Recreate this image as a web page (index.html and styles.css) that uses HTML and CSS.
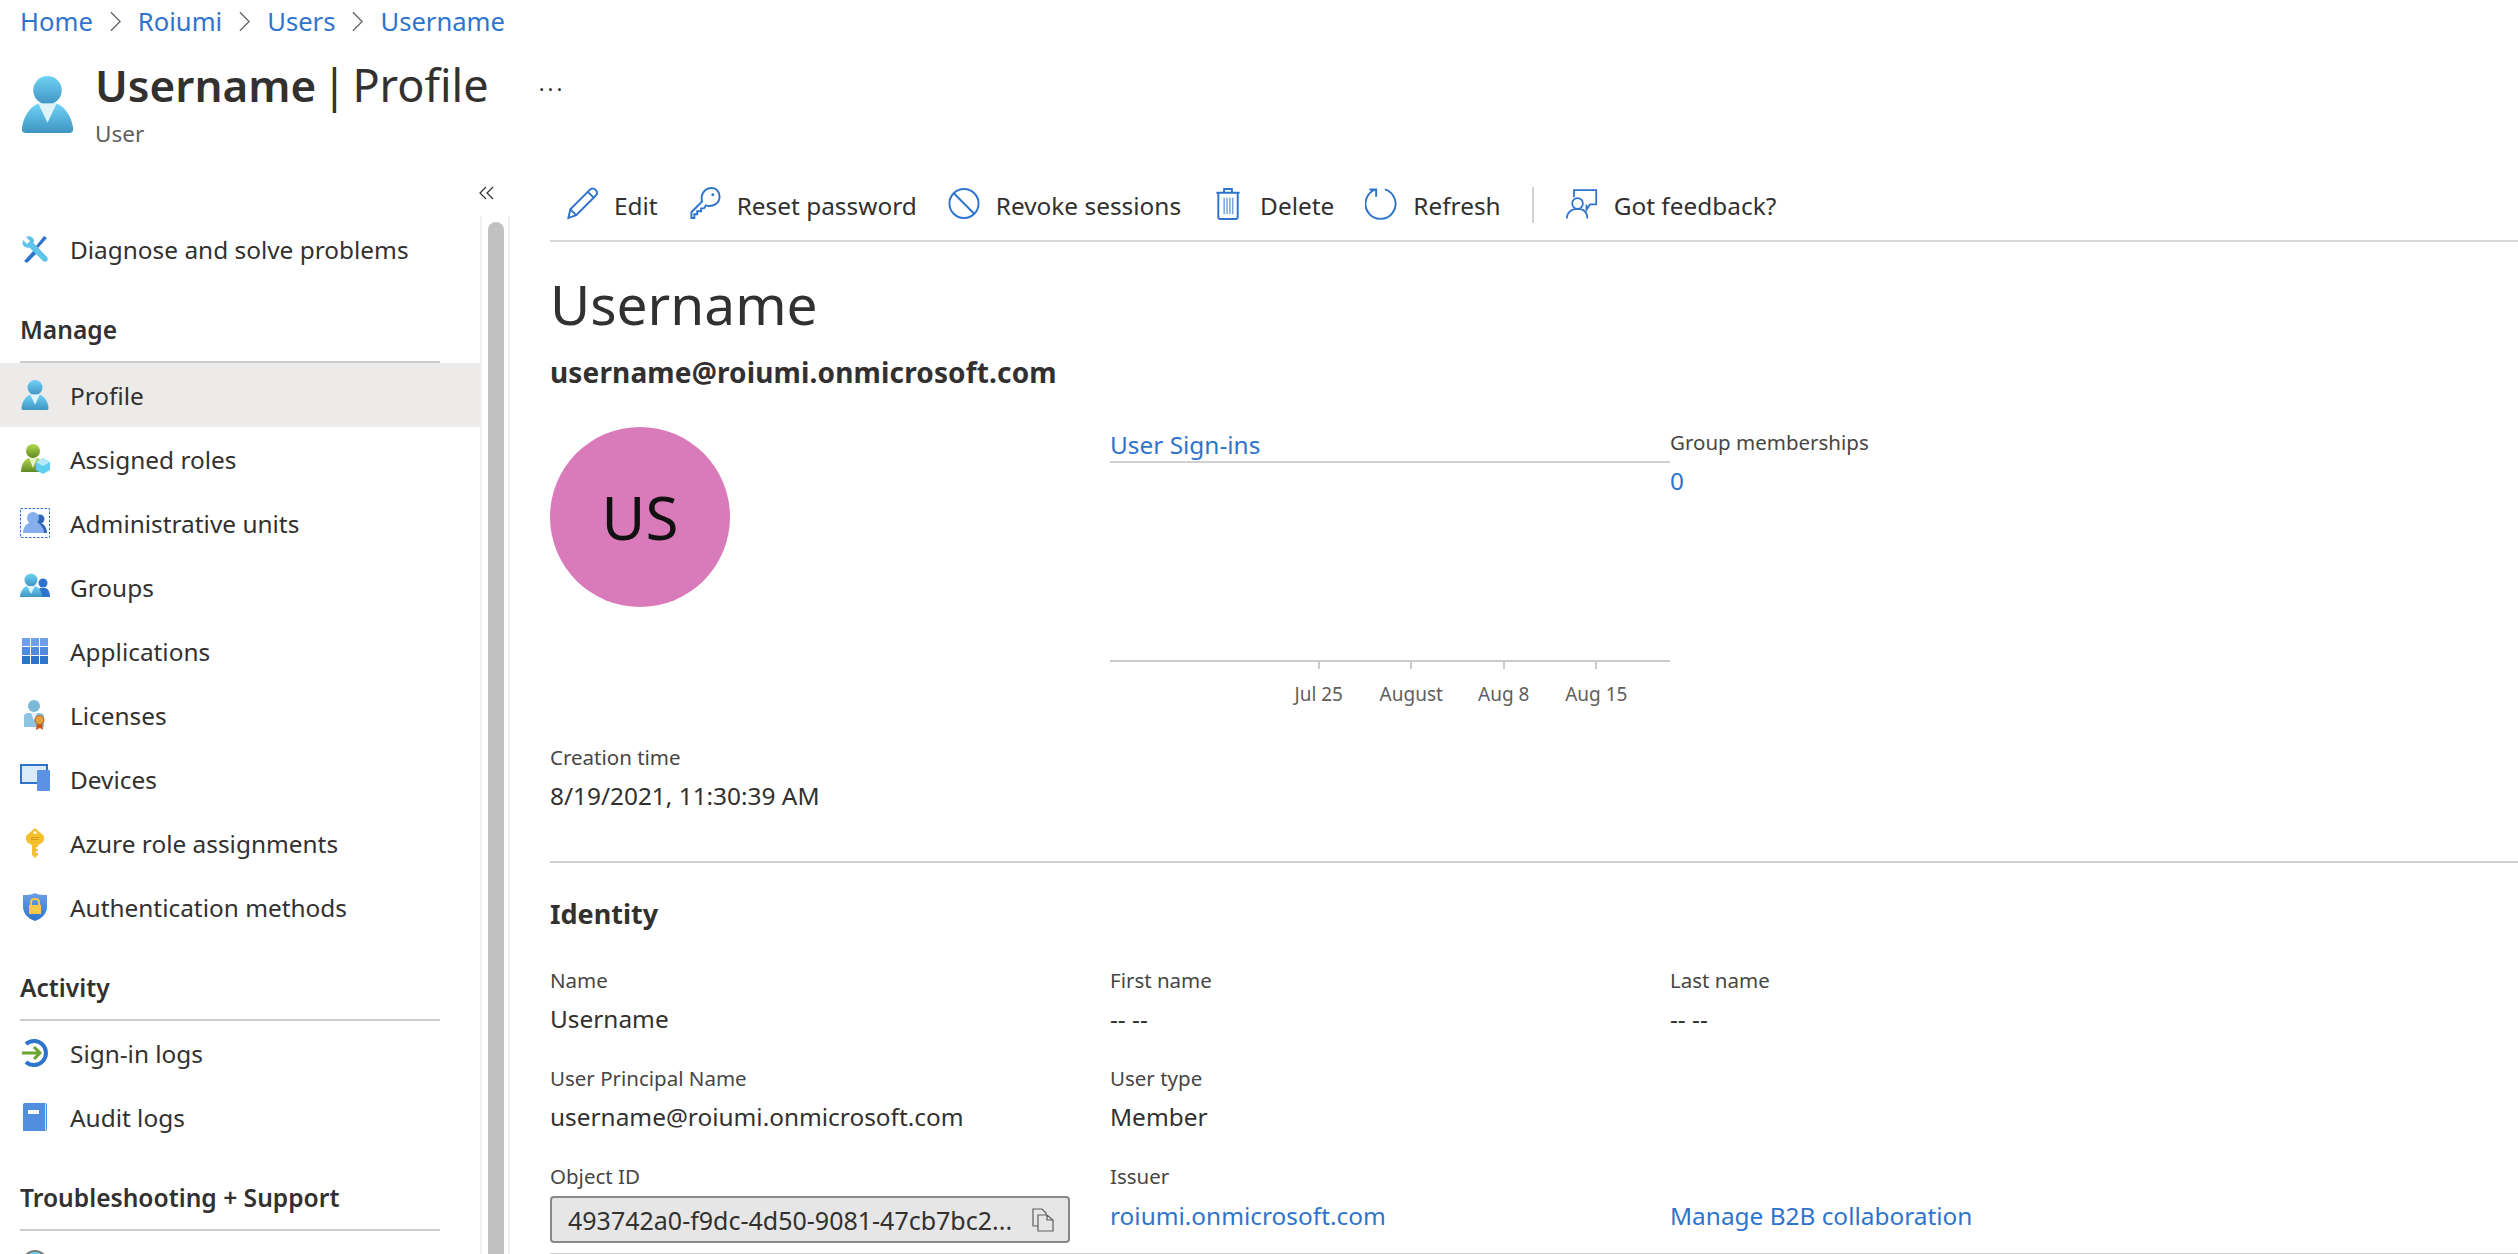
FILE: index.html

```html
<!DOCTYPE html>
<html lang="en">
<head>
    <meta charset="UTF-8">
    <title>Username | Profile</title>
    <link rel="stylesheet" href="styles.css">
</head>
<body>
    <svg class="icon-defs" aria-hidden="true">
        <defs>
            <linearGradient id="grad-sky" x1="0" y1="0" x2="0" y2="1">
                <stop offset="0" stop-color="#6fd3f3"/>
                <stop offset="1" stop-color="#3f94c3"/>
            </linearGradient>
            <linearGradient id="grad-green" x1="0" y1="0" x2="0" y2="1">
                <stop offset="0" stop-color="#b4d84e"/>
                <stop offset="1" stop-color="#5f8a24"/>
            </linearGradient>
            <linearGradient id="grad-blue" x1="0" y1="0" x2="0" y2="1">
                <stop offset="0" stop-color="#6f9fe8"/>
                <stop offset="1" stop-color="#2f74cc"/>
            </linearGradient>
            <symbol id="person" viewBox="0 0 50 56">
                <circle cx="25" cy="14" r="14" fill="url(#grad-sky)"/>
                <path d="M3 56Q-1 56 0 50C2 38 9 29 17 27H33C41 29 48 38 50 50Q51 56 47 56Z" fill="url(#grad-sky)"/>
                <path d="M16 27H34L25 46Z" fill="#dff3fa"/>
            </symbol>
        </defs>
    </svg>

    <nav class="breadcrumb">
        <a href="#">Home</a>
        <svg class="crumb-sep" viewBox="0 0 12 22"><path d="M1 1l10 10L1 21"/></svg>
        <a href="#">Roiumi</a>
        <svg class="crumb-sep" viewBox="0 0 12 22"><path d="M1 1l10 10L1 21"/></svg>
        <a href="#">Users</a>
        <svg class="crumb-sep" viewBox="0 0 12 22"><path d="M1 1l10 10L1 21"/></svg>
        <a href="#">Username</a>
    </nav>

    <header class="page-header">
        <svg class="page-icon"><use href="#person"/></svg>
        <div class="page-titles">
            <h1><b>Username</b> | Profile</h1>
            <div class="page-sub">User</div>
        </div>
        <div class="page-more">···</div>
    </header>

    <div class="layout">
        <aside class="sidebar">
            <div class="side-nav">
                <div class="collapse-row">
                    <svg viewBox="0 0 16 14"><path d="M7 1L1 7l6 6M14 1L8 7l6 6"/></svg>
                </div>

                <a class="nav-item" href="#">
                    <svg class="nav-icon" viewBox="0 0 30 30">
                        <path d="M4 27l11-12 3 3L7 29z" fill="#2f74cc"/>
                        <path d="M24 2l3 2-9 10-2-2z" fill="#2f74cc"/>
                        <path d="M3 6l4 4 3-3-4-4c3-2 7 0 8 3 0 1 0 2-.5 3L27 23c1 1 1 3 0 4s-3 1-4 0L9.500 13.500C5 15 1 11 3 6z" fill="#5ec4ea"/>
                    </svg>
                    <span>Diagnose and solve problems</span>
                </a>

                <h2 class="nav-heading">Manage</h2>
                <a class="nav-item active" href="#">
                    <svg class="nav-icon" viewBox="0 0 30 30"><use href="#person" x="1" y="0" width="28" height="30"/></svg>
                    <span>Profile</span>
                </a>
                <a class="nav-item" href="#">
                    <svg class="nav-icon" viewBox="0 0 30 30">
                        <circle cx="13" cy="7" r="7" fill="url(#grad-green)"/>
                        <path d="M1 28C1 20 5 15 9 14H17C21 15 25 20 25 28Z" fill="url(#grad-green)"/>
                        <path d="M9 14H17L13 24Z" fill="#e6f2c8"/>
                        <path d="M23 14l7 4v8l-7 4-7-4v-8z" fill="#5fd0ef"/>
                        <path d="M23 14l7 4-7 4-7-4z" fill="#b6ecfa"/>
                    </svg>
                    <span>Assigned roles</span>
                </a>
                <a class="nav-item" href="#">
                    <svg class="nav-icon" viewBox="0 0 30 30">
                        <rect x=".5" y=".5" width="29" height="29" fill="none" stroke="#2f74cc" stroke-dasharray="2.500 1.500"/>
                        <circle cx="20" cy="11" r="4.500" fill="#2f68b8"/>
                        <path d="M15 25C15 19 17 15 20 15S27 19 27 25Z" fill="#2f68b8"/>
                        <circle cx="13" cy="10" r="6" fill="#86adec"/>
                        <path d="M3 25C3 19 7 15 10 15H16C20 15 24 20 24 25Z" fill="#86adec"/>
                    </svg>
                    <span>Administrative units</span>
                </a>
                <a class="nav-item" href="#">
                    <svg class="nav-icon" viewBox="0 0 30 30">
                        <circle cx="23" cy="11" r="4.500" fill="#2f74cc"/>
                        <path d="M16 25C16 19 19 16 21 16H25C28 16 30 20 30 25Z" fill="#2f74cc"/>
                        <circle cx="11" cy="8" r="6.500" fill="url(#grad-sky)"/>
                        <path d="M0 25C0 19 4 15 7 14H15C19 15 22 19 22 25Z" fill="url(#grad-sky)"/>
                        <path d="M7 14H15L11 22Z" fill="#dff3fa"/>
                    </svg>
                    <span>Groups</span>
                </a>
                <a class="nav-item" href="#">
                    <svg class="nav-icon" viewBox="0 0 30 30">
                        <path d="M2 2h8v8H2zM11 2h8v8h-8zM20 2h8v8h-8z" fill="#6f9fe8"/>
                        <path d="M2 11h8v8H2zM11 11h8v8h-8zM20 11h8v8h-8z" fill="#4f8adc"/>
                        <path d="M2 20h8v8H2zM11 20h8v8h-8zM20 20h8v8h-8z" fill="#2f74cc"/>
                    </svg>
                    <span>Applications</span>
                </a>
                <a class="nav-item" href="#">
                    <svg class="nav-icon" viewBox="0 0 30 30">
                        <circle cx="14" cy="6" r="6" fill="#7ab8d9"/>
                        <path d="M4 27V16C4 14 6 13 8 13H20C22 13 24 14 24 16V27Z" fill="#8cc4e2"/>
                        <path d="M11 13H17L14 21Z" fill="#e4f3fa"/>
                        <path d="M17 22l-1 8 4-2 3 2-1-8z" fill="#c4581f"/>
                        <circle cx="19.500" cy="20" r="4.500" fill="#e0a23c" stroke="#c4581f"/>
                    </svg>
                    <span>Licenses</span>
                </a>
                <a class="nav-item" href="#">
                    <svg class="nav-icon" viewBox="0 0 30 30">
                        <rect x="1" y="1" width="26" height="18" fill="#d9ebf9" stroke="#2f74cc" stroke-width="2"/>
                        <rect x="17" y="6" width="13" height="21" rx="1" fill="#5b92e4"/>
                    </svg>
                    <span>Devices</span>
                </a>
                <a class="nav-item" href="#">
                    <svg class="nav-icon" viewBox="0 0 30 30">
                        <path d="M15 0l9 8v3c0 3-3 5-6 6v2h-2v2h2v2h-2v2h2v2l-3 3-3-3V17c-3-1-6-3-6-6V8z" fill="#f6c02c"/>
                        <circle cx="15" cy="4.500" r="1.500" fill="#fff"/>
                        <path d="M11 9.500h8M11 11.500h8" stroke="#d99a1c"/>
                    </svg>
                    <span>Azure role assignments</span>
                </a>
                <a class="nav-item" href="#">
                    <svg class="nav-icon" viewBox="0 0 30 30">
                        <path d="M15 1C19 3 23 3 27 3V15C27 22 21 27 15 29 9 27 3 22 3 15V3C7 3 11 3 15 1Z" fill="url(#grad-blue)"/>
                        <rect x="9" y="13" width="12" height="9" fill="#f6c94a"/>
                        <path d="M11 13V10C11 6 19 6 19 10V13" fill="none" stroke="#f6c94a" stroke-width="2"/>
                    </svg>
                    <span>Authentication methods</span>
                </a>

                <h2 class="nav-heading">Activity</h2>
                <a class="nav-item" href="#">
                    <svg class="nav-icon" viewBox="0 0 30 30">
                        <path d="M6 6A12 12 0 1 1 6 24" fill="none" stroke="#2f74cc" stroke-width="4"/>
                        <path d="M2 15H20M14 9l6 6-6 6" fill="none" stroke="#6aa52f" stroke-width="3"/>
                    </svg>
                    <span>Sign-in logs</span>
                </a>
                <a class="nav-item" href="#">
                    <svg class="nav-icon" viewBox="0 0 30 30">
                        <path d="M5 1H25a2 2 0 0 1 2 2V27a2 2 0 0 1-2 2H3V3a2 2 0 0 1 2-2Z" fill="#4f8fde"/>
                        <path d="M25.500 1.500V28" stroke="#cfe2f8"/>
                        <rect x="8" y="8" width="11" height="4" fill="#fff"/>
                    </svg>
                    <span>Audit logs</span>
                </a>

                <h2 class="nav-heading">Troubleshooting + Support</h2>
                <a class="nav-item" href="#">
                    <svg class="nav-icon" viewBox="0 0 30 30">
                        <circle cx="15" cy="15" r="12" fill="#6fd3f3" stroke="#7a7a7a" stroke-width="2"/>
                    </svg>
                </a>
            </div>
            <div class="side-scroll"><div class="side-thumb"></div></div>
        </aside>

        <main class="content">
            <div class="toolbar">
                <button class="tool">
                    <svg viewBox="0 0 32 34"><path d="M2 32l2-9L24 3c2-2 4-2 6 0s2 4 0 6L10 29zM4 23l6 6M22 5l6 6"/></svg>
                    Edit
                </button>
                <button class="tool">
                    <svg viewBox="0 0 32 34"><path d="M2 32V26L13 15C11 7 16 1 23 1c5 0 8 4 8 9 0 7-7 11-14 9l-2 3H12v3H8v3H5v4z"/><circle cx="24" cy="8" r="1.500" class="dot"/></svg>
                    Reset password
                </button>
                <button class="tool tool-wide">
                    <svg viewBox="0 0 32 34"><circle cx="16" cy="17" r="15"/><path d="M5.500 6.500L26.500 27.500"/></svg>
                    Revoke sessions
                </button>
                <button class="tool tool-narrow">
                    <svg viewBox="0 0 26 34"><path d="M1 6H25M9 6V2H17V6M3 6V31a2 2 0 0 0 2 2H21a2 2 0 0 0 2-2V6"/><path class="thin" d="M9 11V28M12 11V28M15 11V28M18 11V28"/></svg>
                    Delete
                </button>
                <button class="tool">
                    <svg viewBox="0 0 32 34"><path d="M20 2.500A15.500 15.500 0 1 1 11 2.500M4 2.500H11V10"/></svg>
                    Refresh
                </button>
                <div class="tool-sep"></div>
                <button class="tool">
                    <svg viewBox="0 0 36 34"><path d="M9 10V2H34V18H27L23 24V18"/><circle cx="13" cy="17" r="6"/><path d="M1 34C1 27 6 23 13 23S24 27 24 34"/></svg>
                    Got feedback?
                </button>
            </div>

            <h2 class="user-name">Username</h2>
            <div class="user-email">username@roiumi.onmicrosoft.com</div>

            <section class="summary">
                <div class="avatar-col">
                    <div class="avatar">US</div>
                </div>
                <div class="chart-col">
                    <a class="chart-title" href="#">User Sign-ins</a>
                    <div class="chart-area">
                        <div class="chart-ticks">
                            <div class="chart-tick"><i></i><span>Jul 25</span></div>
                            <div class="chart-tick"><i></i><span>August</span></div>
                            <div class="chart-tick"><i></i><span>Aug 8</span></div>
                            <div class="chart-tick"><i></i><span>Aug 15</span></div>
                        </div>
                    </div>
                </div>
                <div class="groups-col">
                    <div class="field-label">Group memberships</div>
                    <a class="group-count" href="#">0</a>
                </div>
            </section>

            <div class="creation">
                <div class="field-label">Creation time</div>
                <div class="field-value">8/19/2021, 11:30:39 AM</div>
            </div>

            <section class="identity">
                <h3>Identity</h3>
                <div class="field-grid">
                    <div class="field"><div class="field-label">Name</div><div class="field-value">Username</div></div>
                    <div class="field"><div class="field-label">First name</div><div class="field-value">-- --</div></div>
                    <div class="field"><div class="field-label">Last name</div><div class="field-value">-- --</div></div>

                    <div class="field"><div class="field-label">User Principal Name</div><div class="field-value">username@roiumi.onmicrosoft.com</div></div>
                    <div class="field"><div class="field-label">User type</div><div class="field-value">Member</div></div>
                    <div class="field"></div>

                    <div class="field">
                        <div class="field-label">Object ID</div>
                        <div class="id-box">
                            <span>493742a0-f9dc-4d50-9081-47cb7bc2...</span>
                            <svg viewBox="0 0 22 24"><path d="M6 18H1V1H10L14 5V7M6 7H15L21 12V23H6ZM15 7V12H21"/></svg>
                        </div>
                    </div>
                    <div class="field"><div class="field-label">Issuer</div><a class="field-link" href="#">roiumi.onmicrosoft.com</a></div>
                    <div class="field"><div class="field-label">&nbsp;</div><a class="field-link" href="#">Manage B2B collaboration</a></div>
                </div>
                <div class="identity-rule"></div>
            </section>
        </main>
    </div>
</body>
</html>
```

FILE: styles.css

```css
* {
    box-sizing: border-box;
}

html,
body {
    height: 100%;
    margin: 0;
    overflow: hidden;
}

body {
    font-family: "Noto Sans", "Open Sans", Arial, sans-serif;
    font-size: 24.4px;
    color: #323130;
    background-color: #fff;
    display: flex;
    flex-direction: column;
}

a {
    color: #2f74cc;
    text-decoration: none;
}

.icon-defs {
    display: block;
    width: 0;
    height: 0;
}

/* breadcrumb + title */
.breadcrumb {
    display: flex;
    align-items: center;
    gap: 17px;
    height: 42px;
    padding-left: 20px;
    font-size: 25.6px;
}

.crumb-sep {
    width: 11px;
    height: 21px;
    fill: none;
    stroke: #666;
    stroke-width: 1.5;
}

.page-header {
    display: flex;
    align-items: flex-start;
    height: 109px;
    padding-left: 22px;
}

.page-icon {
    width: 51px;
    height: 57px;
    margin-top: 34px;
    flex: none;
}

.page-titles {
    margin-left: 22px;
}

.page-titles h1 {
    margin: 13px 0 0;
    font-size: 45px;
    font-weight: 400;
    line-height: 60px;
    word-spacing: -6px;
}

.page-titles b {
    font-size: 44px;
    font-weight: 600;
}

.page-sub {
    margin-top: 4px;
    font-size: 22.5px;
    line-height: 30px;
    color: #605e5c;
}

.page-more {
    margin: 31px 0 0 50px;
    font-size: 22px;
    letter-spacing: 3px;
    line-height: 30px;
}

/* sidebar */
.layout {
    display: flex;
    flex: 1;
    min-height: 0;
}

.sidebar {
    display: flex;
    width: 510px;
    flex: none;
}

.side-nav {
    width: 480px;
    flex: none;
}

.collapse-row {
    display: flex;
    justify-content: flex-end;
    align-items: center;
    width: 495px;
    height: 66px;
    padding-top: 18px;
}

.collapse-row svg {
    width: 16px;
    height: 14px;
    fill: none;
    stroke: #323130;
    stroke-width: 1.2;
}

.nav-item {
    display: flex;
    align-items: center;
    gap: 20px;
    height: 64px;
    padding-left: 20px;
    color: #323130;
}

.nav-item.active {
    background-color: #ecebe9;
}

.nav-icon {
    width: 30px;
    height: 30px;
    flex: none;
}

.nav-heading {
    margin: 24px 40px 0 20px;
    height: 58px;
    line-height: 50px;
    font-size: 24.6px;
    font-weight: 600;
    border-bottom: 2px solid #cccccc;
}

.side-scroll {
    width: 30px;
    padding: 6px 4px 0 6px;
    border-left: 2px solid #f1f1f1;
    border-right: 2px solid #f1f1f1;
    margin-top: 65px;
}

.side-thumb {
    height: 100%;
    background-color: #c1c1c1;
    border-radius: 8px 8px 0 0;
}

/* main column */
.content {
    flex: 1;
    min-width: 0;
    padding-left: 40px;
}

.toolbar {
    display: flex;
    align-items: center;
    height: 91px;
    padding: 19px 0 0 16px;
    border-bottom: 2px solid #d8d8d8;
}

.tool {
    display: flex;
    align-items: center;
    gap: 16px;
    padding: 0;
    margin-right: 31px;
    border: none;
    background: none;
    font: inherit;
    color: #323130;
}

.tool svg {
    height: 33px;
    width: 32px;
    margin-top: -3px;
    fill: none;
    stroke: #2f74cc;
    stroke-width: 2;
}

.tool-wide {
    margin-right: 34px;
}

.tool-narrow {
    gap: 19px;
}

.tool-narrow svg {
    width: 26px;
}

.tool svg .dot {
    fill: #2f74cc;
    stroke: none;
}

.tool svg .thin {
    stroke-width: 1;
}

.tool-sep {
    width: 2px;
    height: 36px;
    margin-right: 32px;
    background-color: #d2d2d2;
}

.user-name {
    margin: 26px 0 0;
    font-size: 55px;
    line-height: 72px;
    font-weight: 400;
}

.user-email {
    margin-top: 13px;
    font-size: 28px;
    letter-spacing: .15px;
    line-height: 38px;
    font-weight: 700;
}

.summary {
    display: grid;
    grid-template-columns: 560px 560px 1fr;
    margin-top: 36px;
}

.avatar {
    display: flex;
    align-items: center;
    justify-content: center;
    width: 180px;
    height: 180px;
    border-radius: 50%;
    background-color: #d97abb;
    color: #111;
    font-size: 60px;
}

.chart-title {
    display: block;
    height: 34px;
    line-height: 32px;
    margin-top: 2px;
    border-bottom: 2px solid #d0d0d0;
}

.chart-area {
    height: 200px;
    position: relative;
}

.chart-ticks {
    display: flex;
    height: 100%;
    padding-left: 162.5px;
    padding-top: 197px;
}

.chart-area::after {
    content: "";
    position: absolute;
    left: 0;
    right: 0;
    top: 197px;
    height: 2px;
    background-color: #cccccc;
}

.chart-tick {
    display: flex;
    flex-direction: column;
    align-items: center;
    flex: none;
    width: 92.5px;
    font-size: 19px;
    color: #605e5c;
    white-space: nowrap;
}

.chart-tick i {
    display: block;
    flex: none;
    width: 2px;
    height: 7px;
    margin-top: 2px;
    background-color: #cccccc;
}

.chart-tick span {
    margin-top: 12px;
}

.field-label {
    font-size: 20.5px;
    line-height: 30px;
    color: #484644;
}

.group-count {
    display: block;
    margin-top: 7px;
}

.creation {
    margin-top: 79px;
    padding-bottom: 48px;
    border-bottom: 2px solid #d0d0d0;
}

.field-value {
    margin-top: 7px;
    line-height: 34px;
}

.identity h3 {
    margin: 32px 0 0;
    font-size: 27px;
    font-weight: 700;
    line-height: 38px;
}

.field-grid {
    display: grid;
    grid-template-columns: 560px 560px 1fr;
    margin-top: 32px;
}

.field {
    height: 98px;
}

.field-link {
    display: block;
    margin-top: 8px;
    line-height: 34px;
}

.id-box {
    display: flex;
    align-items: center;
    justify-content: space-between;
    width: 520px;
    height: 47px;
    margin-top: 5px;
    padding: 0 14px 0 16px;
    font-size: 25px;
    background-color: #e6e6e6;
    border: 2px solid #8a8886;
    border-radius: 4px;
}

.id-box svg {
    width: 22px;
    height: 24px;
    fill: none;
    stroke: #605e5c;
    stroke-width: 1.2;
}

.identity-rule {
    height: 3px;
    background-color: #d0d0d0;
    margin-top: -6px;
}
```
